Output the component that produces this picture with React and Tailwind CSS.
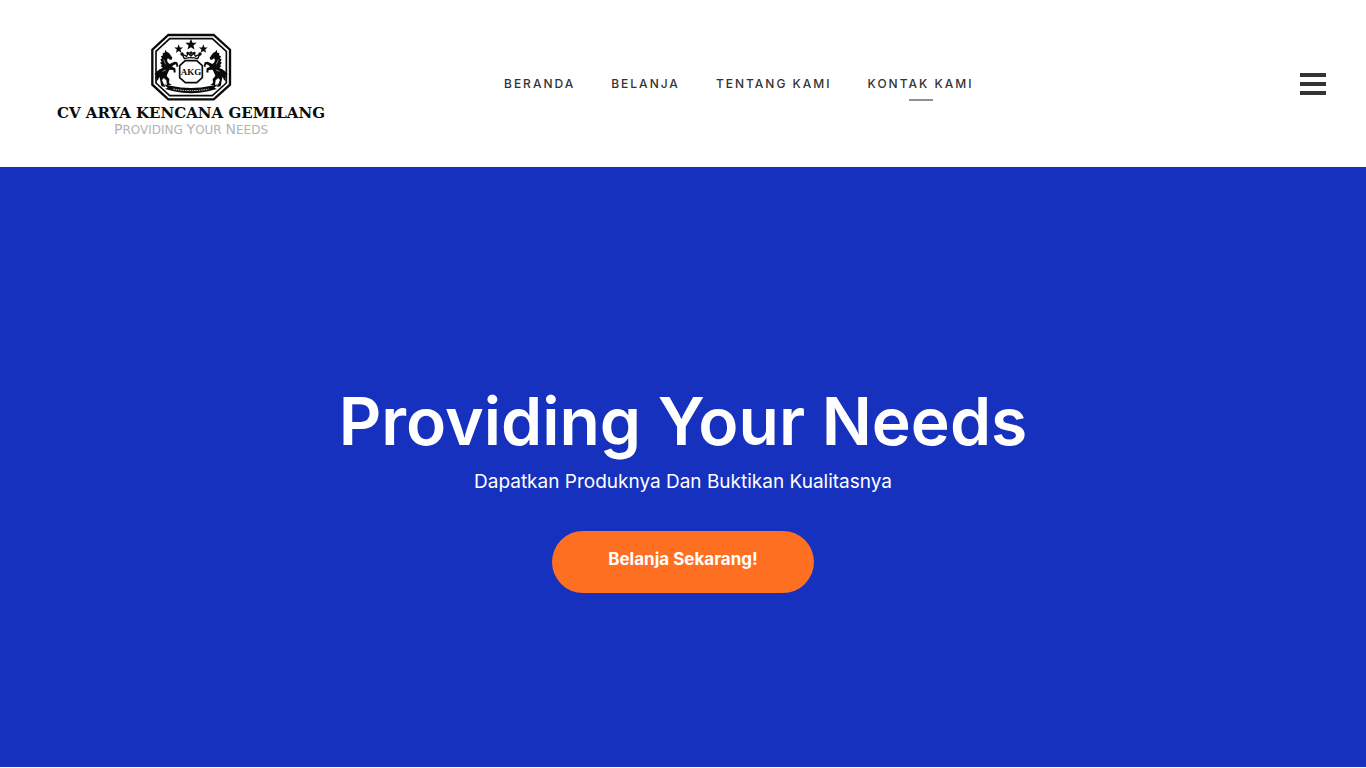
import React from "react";

const links = ["Beranda", "Belanja", "Tentang Kami", "Kontak Kami"];

function Horse() {
  return (
    <g>
      <path
        fill="#0a0a0a"
        d="M61 62 L65 68 L72 72 L82 86 L80 92 L75 92 L69 88 L66 92 L68 100 L74 105 L88 98 L97 100 L100 112 L95 115 L93 106 L86 108 L81 113 L91 118 L92 130 L86 131 L85 123 L73 122 L68 133 L65 141 L73 150 L72 162 L80 168 L66 168 L64 154 L56 147 L51 153 L56 165 L62 174 L49 172 L45 151 L43 143 L39 153 L32 157 L36 146 L29 149 L34 138 L28 136 L36 127 L44 121 L53 117 L47 111 L51 108 L45 101 L50 99 L46 91 L51 89 L48 82 L54 79 L53 72 L59 71 Z"
      />
      <path d="M56 92 L62 106 M52 127 L63 123" fill="none" stroke="#fff" strokeWidth="1.5" />
    </g>
  );
}

function Star({ x, y, r }) {
  return (
    <path
      transform={`translate(${x} ${y}) scale(${r})`}
      d="M0 -1 L.25 -.34 L.95 -.31 L.4 .13 L.59 .81 L0 .42 L-.59 .81 L-.4 .13 L-.95 -.31 L-.25 -.34 Z"
    />
  );
}

function Emblem() {
  return (
    <svg className="h-[78px] w-[92px]" viewBox="0 0 276 234" aria-hidden="true">
      <g fill="none" stroke="#0a0a0a">
        <path fill="#fff" strokeWidth="7" d="M70 18 H206 L255 62 V167 L206 211 H70 L22 167 V62 Z" />
        <path strokeWidth="5" d="M74 29 H202 L244 67 V162 L202 200 H74 L33 162 V67 Z" />
      </g>
      <g fill="#0a0a0a">
        <Star x={138} y={47} r={18} />
        <Star x={101} y={60} r={14} />
        <Star x={175} y={60} r={14} />
      </g>
      <Horse />
      <g transform="translate(276 0) scale(-1 1)">
        <Horse />
      </g>
      <path
        fill="#fff"
        stroke="#0a0a0a"
        strokeWidth="4"
        strokeLinejoin="round"
        d="M118 89 L111 75 L125 82 L129 73 L138 81 L147 73 L151 82 L165 75 L158 89 Q138 83 118 89 Z"
      />
      <g fill="#0a0a0a">
        <circle cx="111" cy="75" r="5" />
        <circle cx="128" cy="72" r="4" />
        <circle cx="148" cy="72" r="4" />
        <circle cx="165" cy="75" r="5" />
        <path d="M136 67 h4 v3 h4 v4 h-4 v6 h-4 v-6 h-4 v-4 h4 Z" />
      </g>
      <path fill="#fff" stroke="#0a0a0a" strokeWidth="5" d="M121 95 H155 L172 110 V146 L155 161 H121 L104 146 V110 Z" />
      <text x="138" y="137" textAnchor="middle" className="fill-[#0a0a0a] font-['Liberation_Serif',serif] text-[27px] font-bold">
        AKG
      </text>
      <path
        fill="#0a0a0a"
        d="M57 166 L77 170 Q138 184 199 170 L219 166 L208 176 L216 180 L190 187 Q138 199 86 187 L60 180 L68 176 Z"
      />
      <path fill="none" stroke="#fff" strokeWidth="3" strokeDasharray="4 3" d="M85 180 Q138 190 191 180" />
    </svg>
  );
}

export default function App() {
  return (
    <div className="bg-white font-['Inter',sans-serif]">
      <header className="flex h-[167px] items-center px-10">
        <a href="#beranda" className="flex w-[302px] shrink-0 flex-col items-center">
          <Emblem />
          <span className="font-['DejaVu_Serif',serif] text-[15px] leading-[13px] font-bold whitespace-nowrap text-[#0a0a0a]">
            CV ARYA KENCANA GEMILANG
          </span>
          <span className="font-['DejaVu_Sans',sans-serif] text-xs leading-[18px] whitespace-nowrap text-[#b4b4b4] uppercase">
            <span className="text-sm leading-[18px]">P</span>roviding <span className="text-sm leading-[18px]">Y</span>our{" "}
            <span className="text-sm leading-[18px]">N</span>eeds
          </span>
        </a>
        <nav aria-label="Utama" className="ml-[162px] flex gap-9">
          {links.map((label) => (
            <a
              key={label}
              href={`#${label.toLowerCase().replace(" ", "-")}`}
              aria-current={label === "Kontak Kami" ? "page" : undefined}
              className="group flex flex-col items-center pt-2 text-xs leading-[18px] font-medium tracking-[2px] whitespace-nowrap text-[#333] uppercase"
            >
              {label}
              <span className="mt-1.5 h-0.5 w-6 group-aria-[current=page]:bg-[#909090]" />
            </a>
          ))}
        </nav>
        <button type="button" aria-label="Menu" className="ml-auto flex flex-col gap-[5px]">
          <span className="h-1 w-[26px] bg-[#333]" />
          <span className="h-1 w-[26px] bg-[#333]" />
          <span className="h-1 w-[26px] bg-[#333]" />
        </button>
      </header>
      <main className="flex min-h-[600px] flex-col items-center bg-[#1631be] px-6 pt-[216px] text-center text-white">
        <h1 className="text-[66px] leading-[76px] font-semibold">Providing Your Needs</h1>
        <p className="mt-2 text-[19px] leading-[30px]">Dapatkan Produknya Dan Buktikan Kualitasnya</p>
        <a href="#belanja" className="mt-[34px] rounded-full bg-[#ff6f22] px-14 pt-4 pb-[22px] text-[17px] leading-6 font-bold">
          Belanja Sekarang!
        </a>
      </main>
    </div>
  );
}
